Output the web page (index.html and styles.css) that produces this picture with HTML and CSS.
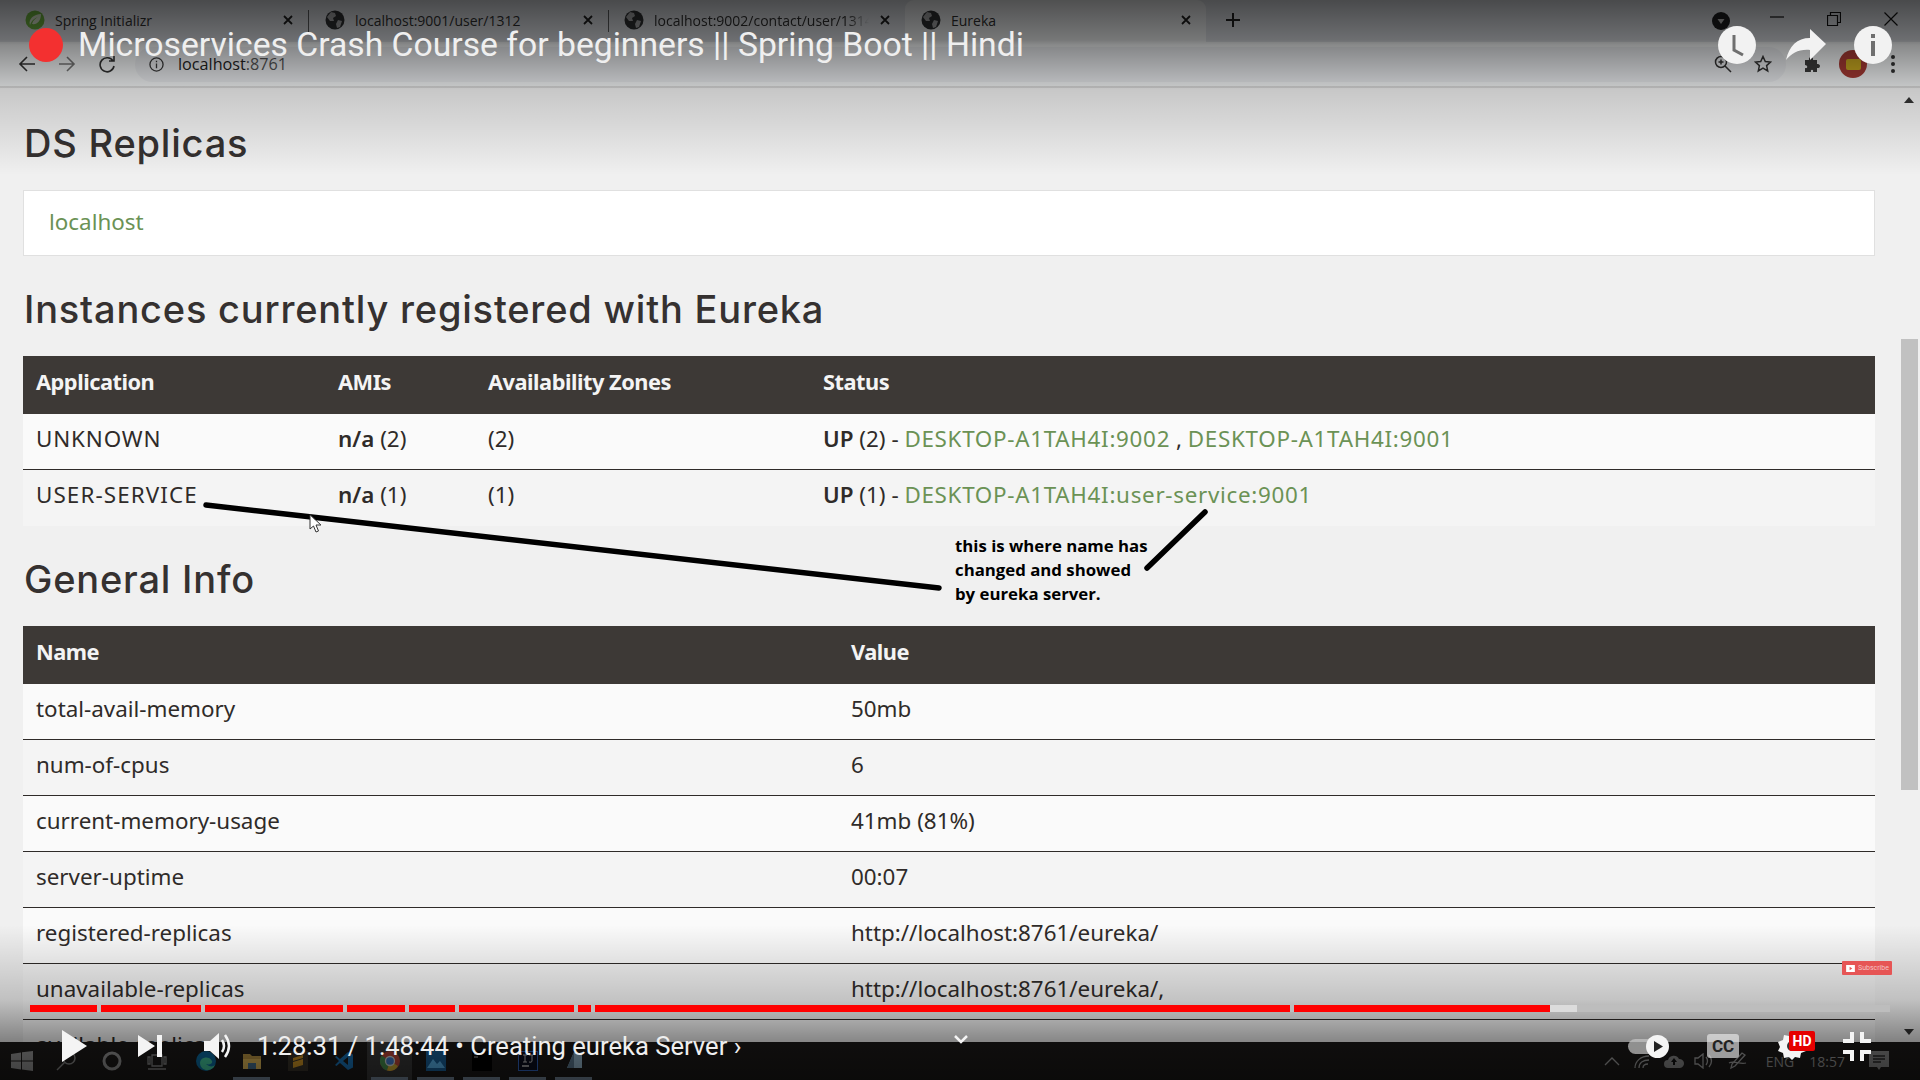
FILE: index.html
```html
<!DOCTYPE html>
<html lang="en">
<head>
<meta charset="utf-8">
<title>Eureka</title>
<link rel="stylesheet" href="styles.css">
</head>
<body>
<div class="screen">
  <header class="chrome">
    <div class="tabstrip">
      <div class="tab">
        <svg class="favicon" viewBox="0 0 20 20"><circle cx="10" cy="10" r="9.5" fill="#6db33f"/><path d="M5 15C3 9 9 4 16 4c0 7-4 11-9 10 1-4 4-6 6-7-3 1-6 3-8 8z" fill="#d5e2c8"/></svg>
        <span class="tab-title">Spring Initializr</span>
        <svg class="tab-x" viewBox="0 0 12 12"><path d="M2 2l8 8M10 2l-8 8"/></svg>
      </div>
      <div class="tab tab-sep">
        <svg class="favicon" viewBox="0 0 20 20"><circle cx="10" cy="10" r="9.5" fill="#2f3133"/><path d="M6 2l4 1 1 3-3 2 1 3-4 0-3-4zM13 10l4 1-2 6-3 1-1-4z" fill="#a9aaac"/></svg>
        <span class="tab-title">localhost:9001/user/1312</span>
        <svg class="tab-x" viewBox="0 0 12 12"><path d="M2 2l8 8M10 2l-8 8"/></svg>
      </div>
      <div class="tab tab-sep tab-narrow">
        <svg class="favicon" viewBox="0 0 20 20"><circle cx="10" cy="10" r="9.5" fill="#2f3133"/><path d="M6 2l4 1 1 3-3 2 1 3-4 0-3-4zM13 10l4 1-2 6-3 1-1-4z" fill="#a9aaac"/></svg>
        <span class="tab-title tab-fade">localhost:9002/contact/user/1314</span>
        <svg class="tab-x" viewBox="0 0 12 12"><path d="M2 2l8 8M10 2l-8 8"/></svg>
      </div>
      <div class="tab tab-active">
        <svg class="favicon" viewBox="0 0 20 20"><circle cx="10" cy="10" r="9.5" fill="#2f3133"/><path d="M6 2l4 1 1 3-3 2 1 3-4 0-3-4zM13 10l4 1-2 6-3 1-1-4z" fill="#a9aaac"/></svg>
        <span class="tab-title">Eureka</span>
        <svg class="tab-x" viewBox="0 0 12 12"><path d="M2 2l8 8M10 2l-8 8"/></svg>
      </div>
      <svg class="new-tab" viewBox="0 0 16 16"><path d="M8 1v14M1 8h14"/></svg>
      <div class="win-controls">
        <span class="tab-search"><svg viewBox="0 0 10 10"><path d="M1.5 3h7L5 8z" fill="#bbb"/></svg></span>
        <svg class="win-ico" viewBox="0 0 14 14"><path d="M0 5h14"/></svg>
        <svg class="win-ico" viewBox="0 0 14 14"><path d="M.5 3.5h10v10H.5zM3.5 3.5V.5h10v10h-3"/></svg>
        <svg class="win-ico" viewBox="0 0 14 14"><path d="M.5.5l13 13M13.5.5l-13 13"/></svg>
      </div>
    </div>
    <div class="toolbar">
      <svg class="nav-ico" viewBox="0 0 18 18"><path d="M17 9H2M9 2L2 9l7 7"/></svg>
      <svg class="nav-ico nav-off" viewBox="0 0 18 18"><path d="M1 9h15M9 2l7 7-7 7"/></svg>
      <svg class="nav-ico" viewBox="0 0 18 18"><path d="M15 6a7 7 0 1 0 1 5M16 1v5h-5"/></svg>
      <div class="omnibox">
        <svg class="site-info" viewBox="0 0 16 16"><circle cx="8" cy="8" r="7"/><path d="M8 7v5M8 4v1.6"/></svg>
        <span class="url">localhost<span class="url-port">:8761</span></span>
        <svg class="omni-ico zoom-ico" viewBox="0 0 18 18"><circle cx="7" cy="7" r="5.5"/><path d="M11 11l6 6M7 4.5v5M4.5 7h5"/></svg>
        <svg class="omni-ico star-ico" viewBox="0 0 18 18"><path d="M9 1.500l2.300 5 5.200.6-3.900 3.500 1.100 5.300L9 13.200l-4.700 2.700 1.100-5.300L1.500 7.100l5.200-.6z"/></svg>
      </div>
      <svg class="puzzle" viewBox="0 0 18 18"><path d="M1 5h4c-1-4 5-4 4 0h4v4c4-1 4 5 0 4v4H9c1-3-3-3-2 0H1v-4c3 1 3-3 0-3z" fill="#3c3c3c"/></svg>
      <span class="avatar"><span class="avatar-in"></span></span>
      <span class="kebab"><i></i><i></i><i></i></span>
    </div>
  </header>

  <div class="viewport">
    <main class="page">
      <h2 class="title">DS Replicas</h2>
      <div class="panel"><a class="link">localhost</a></div>

      <h2 class="title">Instances currently registered with Eureka</h2>
      <table class="grid grid-apps">
        <colgroup><col class="c-app"><col class="c-ami"><col class="c-zone"><col></colgroup>
        <thead><tr><th>Application</th><th>AMIs</th><th>Availability Zones</th><th>Status</th></tr></thead>
        <tbody>
          <tr><td class="caps-wide">UNKNOWN</td><td><b>n/a</b> (2)</td><td>(2)</td><td><b>UP</b> (2) - <a class="link caps">DESKTOP-A1TAH4I:9002</a> , <a class="link caps">DESKTOP-A1TAH4I:9001</a></td></tr>
          <tr><td class="caps-wider">USER-SERVICE</td><td><b>n/a</b> (1)</td><td>(1)</td><td><b>UP</b> (1) - <a class="link caps">DESKTOP-A1TAH4I:user-service:9001</a></td></tr>
        </tbody>
      </table>

      <h2 class="title">General Info</h2>
      <table class="grid grid-info">
        <colgroup><col class="c-name"><col></colgroup>
        <thead><tr><th>Name</th><th>Value</th></tr></thead>
        <tbody>
          <tr><td>total-avail-memory</td><td>50mb</td></tr>
          <tr><td>num-of-cpus</td><td>6</td></tr>
          <tr><td>current-memory-usage</td><td>41mb (81%)</td></tr>
          <tr><td>server-uptime</td><td>00:07</td></tr>
          <tr><td>registered-replicas</td><td>http://localhost:8761/eureka/</td></tr>
          <tr><td>unavailable-replicas</td><td>http://localhost:8761/eureka/,</td></tr>
          <tr><td>available-replicas</td><td></td></tr>
        </tbody>
      </table>
    </main>
    <aside class="scrollbar">
      <span class="sb-up"></span>
      <span class="sb-thumb"></span>
      <span class="sb-down"></span>
    </aside>
  </div>

  <footer class="taskbar">
    <svg class="task-ico win-logo" viewBox="0 0 22 20"><path d="M0 3l10-1.500V9.500H0zM11 1.300L22 0v9.500H11zM0 10.500h10v8L0 17zM11 10.500h11V20l-11-1.500z" fill="#9a9a9a"/></svg>
    <svg class="task-ico search-ico" viewBox="0 0 21 20"><circle cx="13" cy="7" r="6" fill="none" stroke="#8a8a8a" stroke-width="1.500"/><path d="M8.500 11.500L1 19" stroke="#8a8a8a" stroke-width="1.500"/></svg>
    <svg class="task-ico cortana" viewBox="0 0 20 20"><circle cx="10" cy="10" r="8" fill="none" stroke="#999" stroke-width="3"/></svg>
    <svg class="task-ico taskview" viewBox="0 0 20 20"><path d="M5 4h10v11H5zM1 6h2v7H1zM17 6h2v7h-2zM1 18h18" fill="none" stroke="#8a8a8a" stroke-width="1.300"/></svg>
    <span class="apps">
      <span class="app"><svg viewBox="0 0 20 20"><circle cx="10" cy="10" r="10" fill="#0c6fa6"/><path d="M4 12c0-6 9-8 12-2 1 3-3 4-6 3 3 3 7 3 9 1-2 5-9 7-13 3-1-1-2-3-2-5z" fill="#45d0a3"/></svg></span>
      <span class="app app-open"><svg viewBox="0 0 20 20"><path d="M1 3h7l2 2h9v13H1z" fill="#c49c46"/><path d="M1 8h18v10H1z" fill="#e8c05c"/><path d="M6 12h8v6H6z" fill="#4a7494"/></svg></span>
      <span class="app"><svg viewBox="0 0 20 20"><rect width="20" height="20" fill="#3a352b"/><path d="M5 7l10-3v3L5 10zm0 4l10-3v3L5 14zm0 3l10-3v3L5 17z" fill="#d89c26"/></svg></span>
      <span class="app"><svg viewBox="0 0 20 20"><path d="M14 1l5 2.500v13L14 19 6 12l-3.500 3L1 14l4-4-4-4 1.500-1L6 8zm0 5l-5 4 5 4z" fill="#1a78bf"/></svg></span>
      <span class="app app-open app-now"><svg viewBox="0 0 20 20"><circle cx="10" cy="10" r="10" fill="#c44a3b"/><path d="M10 10L1.500 4.500A10 10 0 0 0 7 19.500z" fill="#4a9651"/><path d="M10 10l8 5A10 10 0 0 1 7 19.500z" fill="#d6b434"/><circle cx="10" cy="10" r="4.500" fill="#4482d6" stroke="#ddd" stroke-width="1.300"/></svg></span>
      <span class="app app-open"><svg viewBox="0 0 20 20"><rect width="20" height="20" fill="#1a649f"/><path d="M1 17l6-9 4 5 3-3 5 7z" fill="#5cbcf8"/></svg></span>
      <span class="app app-open"><svg viewBox="0 0 20 20"><rect width="20" height="20" fill="#000"/><path d="M2 3h2M5 3h2M8 3h2M2 6h4" stroke="#bbb"/></svg></span>
      <span class="app app-open"><svg viewBox="0 0 20 20"><rect x=".5" y=".5" width="19" height="19" fill="#0b0f20" stroke="#3268c8"/><path d="M4 15h7" stroke="#ccc" stroke-width="1.500"/><path d="M5 4h4M7 4v7M5 11h4M11 4h4M14 4v6q0 2-3 1" stroke="#ccc" fill="none"/></svg></span>
      <span class="app app-open"><svg viewBox="0 0 20 20"><path d="M3 17L10 1l8 3 0 13z" fill="#9abcd2"/><path d="M3 17l7-16v16z" fill="#5e7c94"/></svg></span>
    </span>
    <span class="tray">
      <svg class="tray-ico caret" viewBox="0 0 16 10"><path d="M1 9l7-7 7 7"/></svg>
      <svg class="tray-ico wifi" viewBox="0 0 18 16"><path d="M1 15C1 8 7 3 15 3M5 15c0-5 4-8 10-8M9 15c0-3 2-4 5-4"/></svg>
      <svg class="tray-ico cloud" viewBox="0 0 22 14"><path d="M5 14a4 4 0 0 1 0-8 6 6 0 0 1 11-1 4.500 4.500 0 0 1 1 9z" fill="#8f8f8f" stroke="none"/><path d="M11 4l-3 4h2v3h2V8h2z" fill="#111" stroke="none"/></svg>
      <svg class="tray-ico vol" viewBox="0 0 20 16"><path d="M1 5h3l5-4v14l-5-4H1zM12 4q3 4 0 8M15 2q5 6 0 12"/></svg>
      <svg class="tray-ico pen" viewBox="0 0 20 18"><path d="M3 16l1-4L14 1l3 2-10 11zM1 11c5-3 11 2 17 0"/></svg>
      <span class="tray-text lang">ENG</span>
      <span class="tray-text clock">18:57</span>
      <svg class="tray-ico notif" viewBox="0 0 20 20"><path d="M0 0h20v16h-8l-2 3-2-3H0z" fill="#8a8a8a" stroke="none"/><path d="M4 5h12M4 8h12M4 11h8" stroke="#2a2a2a"/></svg>
    </span>
  </footer>

  <div class="shade-top"></div>
  <div class="shade-bottom"></div>

  <svg class="ink" viewBox="0 0 1920 1080">
    <path d="M206 505L939 588M1205 512L1147 568"/>
    <path class="cursor" d="M310 515v14l3.500-3 2.500 6 2.500-1-2.500-6h4.500z"/>
  </svg>
  <p class="note">this is where name has<br>changed and showed<br>by eureka server.</p>

  <div class="yt-top">
    <div class="yt-heading">
      <span class="rec"></span>
      <span class="yt-title">Microservices Crash Course for beginners || Spring Boot || Hindi</span>
    </div>
    <div class="yt-actions">
      <svg class="round-ico" viewBox="0 0 38 38"><circle cx="19" cy="19" r="19" fill="#f2f2f2"/><path d="M16 9v15l9 5" fill="none" stroke="#6f6f6f" stroke-width="3"/></svg>
      <svg class="share" viewBox="0 0 40 32"><path d="M24 0l16 15-16 16V21C13 20 6 24 0 31 3 17 11 9 24 9z" fill="#f2f2f2"/></svg>
      <svg class="round-ico" viewBox="0 0 38 38"><circle cx="19" cy="19" r="19" fill="#f2f2f2"/><path d="M19 8v4M19 15v15" stroke="#6f6f6f" stroke-width="4"/></svg>
    </div>
  </div>

  <a class="subscribe"><svg viewBox="0 0 10 8"><rect width="10" height="8" fill="#fff"/><path d="M4 2l3 2-3 2z" fill="#e55"/></svg>Subscribe</a>

  <div class="progress">
    <span class="seg" style="width:67px"></span>
    <span class="seg" style="width:100px"></span>
    <span class="seg" style="width:138px"></span>
    <span class="seg" style="width:58px"></span>
    <span class="seg" style="width:46px"></span>
    <span class="seg" style="width:115px"></span>
    <span class="seg" style="width:13px"></span>
    <span class="seg" style="width:695px"></span>
    <span class="seg" style="width:256px"></span>
    <span class="buffered" style="width:27px"></span>
  </div>

  <div class="yt-controls">
    <svg class="c-play" viewBox="0 0 25 32"><path d="M0 0l25 16L0 32z" fill="#f4f4f4"/></svg>
    <svg class="c-next" viewBox="0 0 24 22"><path d="M0 0l17 11L0 22zM19 0h5v22h-5z" fill="#f4f4f4"/></svg>
    <svg class="c-vol" viewBox="0 0 27 28"><path d="M0 9h6l9-8v26l-9-8H0z" fill="#f4f4f4"/><path d="M18 8q4 6 0 12M21 3q8 11 0 22" fill="none" stroke="#f4f4f4" stroke-width="2.500"/></svg>
    <span class="c-time">1:28:31 / 1:48:44 • Creating eureka Server ›</span>
    <svg class="c-chev" viewBox="0 0 14 9"><path d="M1 1l6 6 6-6" fill="none" stroke="#f4f4f4" stroke-width="2.500"/></svg>
    <div class="c-right">
      <span class="autoplay"><span class="knob"><svg viewBox="0 0 10 12"><path d="M0 0l10 6-10 6z" fill="#222"/></svg></span></span>
      <span class="cc">CC</span>
      <span class="gear"><svg viewBox="0 0 30 30"><path d="M15 1l3 4 5-1 1 5 5 2-2 5 2 4-5 2-1 5-5-1-3 3-3-3-5 1-1-5-5-2 2-4-2-5 5-2 1-5 5 1z" fill="#f4f4f4"/><circle cx="15" cy="15" r="5" fill="#333"/></svg><span class="hd">HD</span></span>
      <svg class="c-full" viewBox="0 0 28 29"><path d="M9 0v9H0M19 0v9h9M9 29v-9H0M19 29v-9h9" fill="none" stroke="#f4f4f4" stroke-width="4"/></svg>
    </div>
  </div>
</div>
</body>
</html>
```

FILE: styles.css
```css
* { box-sizing: border-box; }
html, body { margin: 0; height: 100%; }
body { background: #f0f0f0; }

.screen {
  position: relative;
  width: 1920px;
  height: 1080px;
  overflow: hidden;
  display: flex;
  flex-direction: column;
  font-family: "Noto Sans", "Open Sans", sans-serif;
  color: #2f2b29;
}

/* browser chrome */
.chrome { flex: none; height: 88px; background: #f1f3f4; border-bottom: 2px solid #d8d8d8; display: flex; flex-direction: column; }
.tabstrip { height: 42px; background: #dee1e6; display: flex; align-items: stretch; padding-left: 8px; }
.tab { width: 300px; display: flex; align-items: center; padding: 0 14px 2px 17px; position: relative; }
.tab-sep::before { content: ""; position: absolute; left: 0; top: 10px; height: 22px; width: 1px; background: #5c5e60; }
.tab-narrow { width: 297px; padding-left: 16px; }
.tab-active { width: 301px; padding-left: 16px; background: #f1f3f4; border-radius: 9px 9px 0 0; }
.favicon { width: 20px; height: 20px; flex: none; }
.tab-title { flex: 1; margin-left: 10px; overflow: hidden; white-space: nowrap; font-family: "Open Sans", sans-serif; font-size: 14px; color: #2f2f2f; }
.tab-fade { margin-right: 10px; -webkit-mask-image: linear-gradient(90deg, #000 90%, transparent 100%); mask-image: linear-gradient(90deg, #000 90%, transparent 100%); }
.tab-x { width: 12px; height: 12px; flex: none; fill: none; stroke: #1f1f1f; stroke-width: 1.8; }
.new-tab { width: 16px; height: 16px; align-self: center; margin: -2px 0 0 19px; fill: none; stroke: #222; stroke-width: 2; }
.win-controls { margin-left: auto; display: flex; align-items: flex-start; }
.tab-search { width: 18px; height: 18px; margin: 12px 40px 0 0; border-radius: 50%; background: #1d1e20; padding: 4px; display: flex; }
.tab-search svg { width: 10px; height: 10px; }
.win-ico { width: 14px; height: 14px; margin: 12px 43px 0 0; fill: none; stroke: #111; stroke-width: 1.2; }
.win-ico:last-child { margin-right: 22px; }

.toolbar { flex: 1; display: flex; align-items: center; padding: 0 18px; }
.nav-ico { width: 18px; height: 18px; flex: none; margin-right: 22px; fill: none; stroke: #333; stroke-width: 1.6; }
.nav-off { stroke: #777; }
.nav-ico:nth-child(3) { margin-right: 19px; }
.omnibox { width: 1651px; height: 35px; border-radius: 18px; background: #e8eaed; display: flex; align-items: center; padding: 0 14px; }
.site-info { width: 15px; height: 15px; fill: none; stroke: #3a3a3a; stroke-width: 1.4; }
.url { margin-left: 14px; font-family: "Open Sans", sans-serif; font-size: 16.2px; color: #222; }
.url-port { color: #555; }
.omni-ico { width: 18px; height: 18px; fill: none; stroke: #333; stroke-width: 1.5; }
.zoom-ico { margin-left: auto; }
.star-ico { margin-left: 22px; }
.puzzle { width: 18px; height: 18px; margin-left: 18px; flex: none; }
.avatar { width: 28px; height: 28px; margin-left: 17px; border-radius: 50%; background: #a73a34; flex: none; display: flex; align-items: center; justify-content: center; }
.avatar-in { width: 15px; height: 11px; background: #c9a820; border-radius: 2px; }
.kebab { margin-left: 24px; display: flex; flex-direction: column; gap: 3px; flex: none; }
.kebab i { width: 4px; height: 4px; border-radius: 50%; background: #333; display: block; }

/* page */
.viewport { flex: 1; min-height: 0; display: flex; }
.page { flex: 1; min-width: 0; overflow: hidden; padding: 33px 23px 0; background: #f0f0f0; }
.title { height: 44px; margin: 0 0 25px 1px; font-family: Inter, "Open Sans", sans-serif; font-weight: 500; font-size: 38px; letter-spacing: .8px; line-height: 44px; color: #353130; white-space: nowrap; }
.panel { height: 66px; margin-bottom: 31px; padding: 0 25px 4px; display: flex; align-items: center; background: #fff; border: 1px solid #e0e0e0; font-size: 22.4px; }
.link { color: #6b9255; }
.caps { letter-spacing: .7px; }
.caps-wide { letter-spacing: .85px; }
.caps-wider { letter-spacing: 1.1px; }
.grid { width: 100%; table-layout: fixed; border-collapse: collapse; margin-bottom: 37px; font-size: 22.4px; }
.grid th { height: 58px; padding: 0 13px 8px; text-align: left; font-weight: 700; font-size: 21.8px; background: #3d3936; color: #f4f4f4; letter-spacing: -.5px; }
.grid td { height: 56px; padding: 0 13px 5px; border-bottom: 1px solid #2f2b29; white-space: nowrap; }
.grid tbody tr:first-child td { height: 55px; }
.grid tbody tr:nth-child(odd) td { background: #fafafa; }
.grid tbody tr:nth-child(even) td { background: #f4f4f4; }
.grid-apps { margin-bottom: 31px; }
.grid-apps tbody tr:last-child td { height: 57px; padding-bottom: 6px; border-bottom: 0; }
.grid td b { font-weight: 600; }
.c-app { width: 302px; }
.c-ami { width: 150px; }
.c-zone { width: 335px; }
.c-name { width: 815px; }

.scrollbar { flex: none; width: 22px; background: #f0f0f0; display: flex; flex-direction: column; align-items: center; position: relative; }
.sb-up { margin-top: 9px; border: 5px solid transparent; border-top: 0; border-bottom: 6px solid #333; }
.sb-thumb { width: 17px; height: 451px; margin-top: 236px; background: #c1c1c1; }
.sb-down { margin-top: 239px; border: 5px solid transparent; border-bottom: 0; border-top: 6px solid #333; }

/* taskbar */
.taskbar { flex: none; height: 38px; background: #1c1a19; display: flex; align-items: center; padding-left: 11px; position: relative; }
.task-ico { flex: none; }
.win-logo { width: 22px; height: 20px; }
.search-ico { width: 21px; height: 20px; margin-left: 23px; }
.cortana { width: 20px; height: 20px; margin-left: 25px; }
.taskview { width: 20px; height: 20px; margin-left: 25px; }
.apps { display: flex; align-items: stretch; height: 100%; margin-left: 16px; gap: 1px; }
.app { width: 45px; display: flex; align-items: center; justify-content: center; position: relative; }
.app svg { width: 20px; height: 20px; }
.app-open::after { content: ""; position: absolute; left: 4px; right: 4px; bottom: 0; height: 3px; background: #7c8fa3; }
.app-now { background: #3a3a3a; }
.tray { margin-left: auto; display: flex; align-items: center; height: 100%; }
.tray-ico { flex: none; fill: none; stroke: #a5a5a5; stroke-width: 1.3; }
.caret { width: 16px; height: 10px; margin-right: 14px; }
.wifi { width: 18px; height: 16px; margin-right: 11px; }
.cloud { width: 22px; height: 14px; margin-right: 9px; }
.vol { width: 20px; height: 16px; margin-right: 14px; }
.pen { width: 20px; height: 18px; margin-right: 18px; }
.tray-text { color: #9a9a9a; font-size: 14px; font-family: "Open Sans", sans-serif; }
.clock { margin-left: 15px; margin-right: 24px; }
.notif { width: 20px; height: 20px; margin-right: 31px; }

/* video overlays */
.shade-top, .shade-bottom { position: absolute; left: 0; right: 0; pointer-events: none; }
.shade-top { top: 0; height: 175px; background: linear-gradient(180deg, rgba(0,0,0,.67) 0, rgba(0,0,0,.51) 40px, rgba(0,0,0,.43) 45px, rgba(0,0,0,.17) 90px, rgba(0,0,0,.05) 150px, rgba(0,0,0,0) 175px); }
.shade-bottom { top: 925px; bottom: 0; background: linear-gradient(180deg, rgba(0,0,0,0) 0, rgba(0,0,0,.2) 75px, rgba(0,0,0,.45) 115px, rgba(0,0,0,.6) 155px); }

.ink { position: absolute; left: 0; top: 0; width: 1920px; height: 1080px; fill: none; stroke: #000; stroke-width: 5.5; stroke-linecap: round; pointer-events: none; }
.cursor { fill: #fff; stroke: #333; stroke-width: 1; }
.note { position: absolute; left: 955px; top: 534px; margin: 0; font-family: "Open Sans", sans-serif; font-weight: 700; font-size: 16.8px; line-height: 24px; color: #000; }

.yt-top { position: absolute; left: 29px; right: 28px; top: 26px; display: flex; justify-content: space-between; align-items: center; height: 38px; }
.yt-heading { display: flex; align-items: center; }
.rec { width: 34px; height: 34px; border-radius: 50%; background: #f33030; flex: none; }
.yt-title { margin-left: 15px; font-family: Roboto, sans-serif; font-size: 33.7px; color: #efefef; white-space: nowrap; margin-top: -2px; }
.yt-actions { display: flex; align-items: center; }
.round-ico { width: 38px; height: 38px; }
.share { width: 40px; height: 32px; margin: 0 28px 0 30px; }

.subscribe { position: absolute; left: 1842px; top: 961px; width: 50px; height: 14px; background: #e65555; border-radius: 1px; display: flex; align-items: center; padding-left: 4px; gap: 3px; font-size: 7px; color: #f5c4c4; font-family: Roboto, sans-serif; }
.subscribe svg { width: 9px; height: 7px; }

.progress { position: absolute; left: 30px; top: 1005px; width: 1860px; height: 7px; background: #bdbdbd; display: flex; gap: 4px; }
.seg { background: #f00; height: 100%; }
.buffered { background: #dcdcdc; height: 100%; margin-left: -4px; }

.yt-controls { position: absolute; left: 62px; top: 1028px; right: 49px; height: 36px; display: flex; align-items: center; }
.c-play { width: 25px; height: 32px; }
.c-next { width: 24px; height: 22px; margin-left: 51px; }
.c-vol { width: 27px; height: 28px; margin-left: 42px; }
.c-time { margin-left: 26px; font-family: Roboto, sans-serif; font-size: 25.6px; color: #efefef; white-space: nowrap; }
.c-chev { width: 14px; height: 9px; margin: -13px 0 0 213px; }
.c-right { margin-left: auto; display: flex; align-items: center; }
.autoplay { width: 34px; height: 15px; border-radius: 8px; background: rgba(200,200,200,.7); position: relative; }
.knob { position: absolute; right: -7px; top: -4px; width: 23px; height: 23px; border-radius: 50%; background: #f4f4f4; display: flex; align-items: center; justify-content: center; }
.knob svg { width: 9px; height: 11px; margin-left: 2px; }
.cc { width: 32px; height: 24px; margin-left: 45px; border-radius: 3px; background: rgba(235,235,235,.65); font: 700 17px/24px Roboto, sans-serif; text-align: center; color: #222; }
.gear { position: relative; width: 30px; height: 30px; margin-left: 38px; display: block; }
.gear svg { width: 30px; height: 30px; }
.hd { position: absolute; left: 12px; top: 0; width: 26px; height: 20px; background: #e60000; border-radius: 2px; color: #fff; font: 700 14px/20px Roboto, sans-serif; text-align: center; }
.c-full { width: 28px; height: 29px; margin-left: 36px; }
```
